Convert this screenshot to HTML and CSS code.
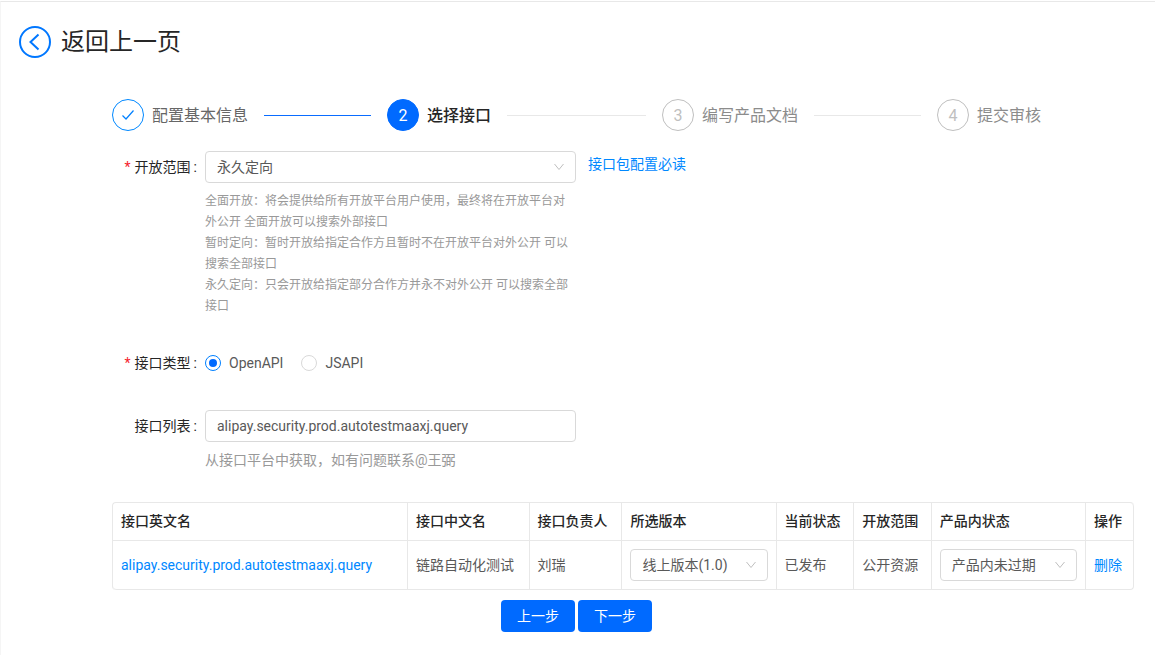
FILE: index.html
```html
<!DOCTYPE html>
<html lang="zh-CN">
<head>
<meta charset="utf-8">
<meta name="viewport" content="width=device-width, initial-scale=1">
<title>选择接口</title>
<link rel="stylesheet" href="styles.css">
</head>
<body>
<div class="page">
  <header class="page-header">
    <a class="back" href="#">
      <svg class="back-icon" viewBox="0 0 32 32" aria-hidden="true"><circle cx="16" cy="16" r="15"/><path d="M19.500 8.500 11.500 16l8 7.500"/></svg>
      <span>返回上一页</span>
    </a>
  </header>

  <main class="content">
    <ol class="steps">
      <li class="step step-done">
        <span class="step-icon"><svg class="check" viewBox="0 0 16 16" aria-hidden="true"><path d="M2.500 8.500 6 12l7.500-8.500"/></svg></span>
        <span class="step-title">配置基本信息</span>
      </li>
      <li class="step step-active" aria-current="step">
        <span class="step-icon">2</span>
        <span class="step-title">选择接口</span>
      </li>
      <li class="step">
        <span class="step-icon">3</span>
        <span class="step-title">编写产品文档</span>
      </li>
      <li class="step">
        <span class="step-icon">4</span>
        <span class="step-title">提交审核</span>
      </li>
    </ol>

    <form class="form">
      <div class="row">
        <label class="label required" for="scope">开放范围</label>
        <div class="control">
          <div class="select">
            <select id="scope"><option>永久定向</option></select>
            <svg class="arrow" viewBox="0 0 12 12" aria-hidden="true"><path d="M1.500 3 6 8.500 10.500 3"/></svg>
          </div>
          <div class="help help-small">
            <p>全面开放：将会提供给所有开放平台用户使用，最终将在开放平台对外公开 全面开放可以搜索外部接口</p>
            <p>暂时定向：暂时开放给指定合作方且暂时不在开放平台对外公开 可以搜索全部接口</p>
            <p>永久定向：只会开放给指定部分合作方并永不对外公开 可以搜索全部接口</p>
          </div>
        </div>
        <a class="guide" href="#">接口包配置必读</a>
      </div>

      <div class="row" role="radiogroup" aria-labelledby="type-label">
        <span class="label required" id="type-label">接口类型</span>
        <div class="control radios">
          <label class="radio"><input type="radio" name="type" checked>OpenAPI</label>
          <label class="radio"><input type="radio" name="type">JSAPI</label>
        </div>
      </div>

      <div class="row">
        <label class="label" for="api">接口列表</label>
        <div class="control">
          <input class="input" id="api" type="text" value="alipay.security.prod.autotestmaaxj.query">
          <p class="help">从接口平台中获取，如有问题联系@王弼</p>
        </div>
      </div>

      <table class="table">
        <colgroup>
          <col class="col-en"><col class="col-cn"><col class="col-owner"><col class="col-version">
          <col class="col-state"><col class="col-state"><col class="col-product"><col>
        </colgroup>
        <thead>
          <tr>
            <th>接口英文名</th><th>接口中文名</th><th>接口负责人</th><th>所选版本</th>
            <th>当前状态</th><th>开放范围</th><th>产品内状态</th><th>操作</th>
          </tr>
        </thead>
        <tbody>
          <tr>
            <td><a href="#">alipay.security.prod.autotestmaaxj.query</a></td>
            <td>链路自动化测试</td>
            <td>刘瑞</td>
            <td>
              <div class="select">
                <select aria-label="所选版本"><option>线上版本(1.0)</option></select>
                <svg class="arrow" viewBox="0 0 12 12" aria-hidden="true"><path d="M1.500 3 6 8.500 10.500 3"/></svg>
              </div>
            </td>
            <td>已发布</td>
            <td>公开资源</td>
            <td>
              <div class="select">
                <select aria-label="产品内状态"><option>产品内未过期</option></select>
                <svg class="arrow" viewBox="0 0 12 12" aria-hidden="true"><path d="M1.500 3 6 8.500 10.500 3"/></svg>
              </div>
            </td>
            <td><a href="#">删除</a></td>
          </tr>
        </tbody>
      </table>

      <div class="actions">
        <button class="button" type="button">上一步</button>
        <button class="button" type="button">下一步</button>
      </div>
    </form>
  </main>
</div>
</body>
</html>
```

FILE: styles.css
```css
* { box-sizing: border-box; }

body {
  margin: 0;
  background: #fff;
  color: #595959;
  font: 14px/21px Roboto, "Noto Sans CJK SC", sans-serif;
}

p { margin: 0; }

a { color: #0088ff; text-decoration: none; }

input, select, button { font: inherit; color: inherit; }

.page {
  margin-top: 1px;
  border-top: 1px solid #e8e8e8;
  border-left: 1px solid #f5f5f5;
}

.page-header { padding: 22px 18px 0; }

.back {
  display: inline-flex;
  align-items: center;
  gap: 10px;
  color: #262626;
  font-size: 24px;
  line-height: 36px;
}

.back-icon {
  width: 32px;
  height: 32px;
  fill: none;
  stroke: #0077ff;
  stroke-width: 2;
}

.content { padding: 35px 21px 24px 111px; }

.steps {
  display: flex;
  gap: 16px;
  margin: 0 93px 20px 0;
  padding: 0;
  list-style: none;
  font-size: 16px;
}

.step {
  display: flex;
  flex: 1;
  align-items: center;
  gap: 8px;
  color: #8c8c8c;
  white-space: nowrap;
}

.step:last-child { flex: none; }

.step:not(:last-child)::after {
  content: "";
  flex: 1;
  height: 1px;
  margin-left: 8px;
  background: #e8e8e8;
}

.step-icon {
  display: flex;
  align-items: center;
  justify-content: center;
  width: 32px;
  height: 32px;
  border: 1px solid #bfbfbf;
  border-radius: 50%;
  color: #bfbfbf;
}

.step-done { color: #666; }
.step-done .step-icon { border-color: #0088ff; }
.step.step-done::after { background: #0a6cff; }

.check {
  width: 16px;
  height: 16px;
  fill: none;
  stroke: #0080ff;
  stroke-width: 1.2;
}

.step-active { color: #262626; font-weight: 500; }
.step-active .step-icon {
  border-color: #006aff;
  background: #006aff;
  color: #fff;
  font-weight: 400;
}

.row {
  display: grid;
  grid-template-columns: 93fr 371fr 558fr;
}

.row + .row { margin-top: 31px; }

.label {
  padding-right: 8px;
  color: #262626;
  line-height: 32px;
  text-align: right;
  white-space: nowrap;
}

.label::after { content: ":"; margin-left: 3px; }

.required::before {
  content: "*";
  margin-right: 4px;
  color: #f5222d;
}

.control { min-width: 0; }

.select { position: relative; }

.select select,
.input {
  display: block;
  width: 100%;
  height: 32px;
  padding: 0 11px;
  border: 1px solid #d9d9d9;
  border-radius: 4px;
  background: #fff;
  appearance: none;
}

.arrow {
  position: absolute;
  top: 10px;
  right: 11px;
  width: 12px;
  height: 12px;
  fill: none;
  stroke: #bfbfbf;
  pointer-events: none;
}

.help { margin-top: 8px; color: #999; }
.help-small { margin-bottom: -1px; font-size: 12px; }

.guide {
  justify-self: start;
  margin-left: 12px;
  padding-top: 3px;
}

.radios { display: flex; gap: 18px; }

.radio {
  display: flex;
  align-items: center;
  gap: 8px;
}

.radio input {
  width: 16px;
  height: 16px;
  margin: 0;
  border: 1px solid #d9d9d9;
  border-radius: 50%;
  background: #fff;
  appearance: none;
}

.radio input:checked {
  padding: 3px;
  border-color: #0080ff;
  background: #006aff content-box;
}

.table {
  width: 100%;
  margin-top: 31px;
  border: 1px solid #e8e8e8;
  border-width: 1px 0 0 1px;
  border-radius: 4px;
  border-spacing: 0;
  table-layout: fixed;
}

.table th,
.table td {
  padding: 8px;
  border: 1px solid #e8e8e8;
  border-width: 0 1px 1px 0;
  text-align: left;
  white-space: nowrap;
}

.table th { color: #262626; font-weight: 500; }
.table th:last-child { border-top-right-radius: 4px; }
.table td:first-child { border-bottom-left-radius: 4px; }
.table td:last-child { border-bottom-right-radius: 4px; }

.col-en { width: 28.9%; }
.col-cn { width: 11.9%; }
.col-owner { width: 9.1%; }
.col-version { width: 15.1%; }
.col-product { width: 15.1%; }
.col-state { width: 7.6%; }

.actions {
  display: flex;
  justify-content: center;
  gap: 3px;
  margin-top: 10px;
  padding-right: 93px;
}

.button {
  height: 32px;
  padding: 0 16px;
  border: 0;
  border-radius: 4px;
  background: #006aff;
  color: #fff;
}
```
